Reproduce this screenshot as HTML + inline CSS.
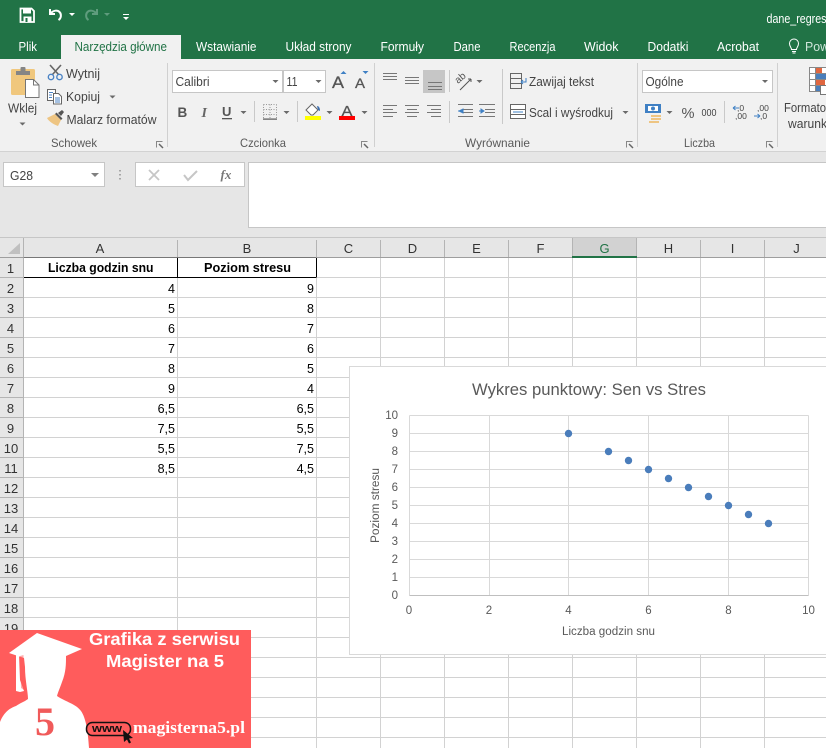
<!DOCTYPE html>
<html><head><meta charset="utf-8"><style>
html,body{margin:0;padding:0;background:#fff;width:826px;height:748px;overflow:hidden}
svg{display:block}
text{font-family:"Liberation Sans",sans-serif;font-size:12.5px;fill:#444}
.t{fill:#fff}
.g{fill:#595959;font-size:12px}
.h{fill:#333;font-size:13px;text-anchor:middle}
.b{fill:#000;font-size:13px;font-weight:bold}
.v{fill:#000;font-size:12.5px;text-anchor:end}
.ct{fill:#595959;font-size:11.5px}
.l{stroke:#777;stroke-width:1;fill:none}
.car{fill:#6a6a6a}
</style></head><body>
<svg width="826" height="748" viewBox="0 0 826 748" xmlns="http://www.w3.org/2000/svg">
<rect width="826" height="748" fill="#fff"/>
<!-- title bar -->
<rect width="826" height="60" fill="#217346"/>
<path d="M20.500 8.500h11l2.500 2.500v11h-13.500z" fill="none" stroke="#fff" stroke-width="1.800"/>
<rect x="23" y="9" width="8" height="4.500" fill="#fff"/><rect x="23.500" y="16.500" width="8" height="5.500" fill="#fff"/><rect x="25.500" y="18" width="2" height="4" fill="#217346"/>
<path d="M50 9v5h5M50.500 13.500c3-3.500 7-3.500 9-1.500s2 6-1 8" fill="none" stroke="#fff" stroke-width="2"/>
<path d="M69 13h6l-3 3z" fill="#fff"/>
<path d="M97 9v5h-5M96.500 13.500c-3-3.500-7-3.500-9-1.500s-2 6 1 8" fill="none" stroke="#5f9c7d" stroke-width="2"/>
<path d="M104 13h6l-3 3z" fill="#5f9c7d"/>
<rect x="123" y="14" width="6" height="1" fill="#fff"/><path d="M123 17h6l-3 3z" fill="#fff"/>
<text class="t" x="766.500" y="23" textLength="60" lengthAdjust="spacingAndGlyphs">dane_regres</text>
<!-- tabs -->
<rect x="61" y="35" width="120" height="25" fill="#f1f1f1"/>
<text class="t" x="18.500" y="51" textLength="18.500" lengthAdjust="spacingAndGlyphs">Plik</text>
<text x="74.500" y="51" textLength="92.500" lengthAdjust="spacingAndGlyphs" style="fill:#217346">Narzędzia główne</text>
<text class="t" x="196" y="51" textLength="60.500" lengthAdjust="spacingAndGlyphs">Wstawianie</text>
<text class="t" x="285.500" y="51" textLength="66" lengthAdjust="spacingAndGlyphs">Układ strony</text>
<text class="t" x="380.500" y="51" textLength="43.500" lengthAdjust="spacingAndGlyphs">Formuły</text>
<text class="t" x="453.500" y="51" textLength="27" lengthAdjust="spacingAndGlyphs">Dane</text>
<text class="t" x="509.500" y="51" textLength="46" lengthAdjust="spacingAndGlyphs">Recenzja</text>
<text class="t" x="584" y="51" textLength="34.500" lengthAdjust="spacingAndGlyphs">Widok</text>
<text class="t" x="647.500" y="51" textLength="41" lengthAdjust="spacingAndGlyphs">Dodatki</text>
<text class="t" x="717" y="51" textLength="42" lengthAdjust="spacingAndGlyphs">Acrobat</text>
<path d="M791.500 49.500c0-2-2-3-2-6a4.500 4.500 0 0 1 9 0c0 3-2 4-2 6zM792 51.500h4M792.500 53h3" fill="none" stroke="#fff" stroke-width="1"/>
<text x="805" y="51" textLength="24" lengthAdjust="spacingAndGlyphs" style="fill:#cfe5da">Pow</text>
<!-- ribbon -->
<rect y="59" width="826" height="92" fill="#f1f1f1"/>
<rect y="151" width="826" height="87" fill="#e6e6e6"/>
<rect y="151" width="826" height="1" fill="#d2d2d2"/>
<path d="M167.500 63v84M374.500 63v84M637.500 63v84M777.500 63v84" stroke="#d0d0d0" fill="none"/>
<!-- clipboard -->
<rect x="11" y="69" width="24" height="26" rx="1.500" fill="#f0c77d"/>
<path d="M16 71h14v4H16z" fill="#858585"/><rect x="20.500" y="67" width="5" height="5" rx="1" fill="#858585"/>
<path d="M25.500 79.500h8l5.500 5.500v12.500h-13.500z" fill="#fff" stroke="#767676"/>
<path d="M33.500 79.500v5.500h5.500" fill="none" stroke="#767676"/>
<text x="8" y="112.500" textLength="29" lengthAdjust="spacingAndGlyphs">Wklej</text>
<path d="M19.500 122.500h6l-3 3z" class="car"/>
<!-- scissors -->
<path d="M50 65l8.500 9.500M61 65l-8.500 9.500" stroke="#666" stroke-width="1.600" fill="none"/>
<circle cx="51" cy="77" r="2.700" fill="none" stroke="#4b83c4" stroke-width="1.400"/><circle cx="59.500" cy="77" r="2.700" fill="none" stroke="#4b83c4" stroke-width="1.400"/>
<text x="66" y="78" textLength="34" lengthAdjust="spacingAndGlyphs">Wytnij</text>
<!-- copy -->
<path d="M47.500 89.500h8v11h-8z" fill="#fff" stroke="#666"/><path d="M53.500 93.500h5l3 3v7.500h-8z" fill="#fff" stroke="#666"/>
<path d="M49 92.500h4M49 95h3M49 97.500h3M55 98h5M55 100h5M55 102h5" stroke="#4b83c4"/>
<text x="66" y="101" textLength="34" lengthAdjust="spacingAndGlyphs">Kopiuj</text>
<path d="M109.500 95.500h6l-3 3z" class="car"/>
<!-- painter -->
<path d="M47 118l8-4 6 6-3 6c-3-1-9-4-11-8z" fill="#eec583"/>
<path d="M55 114l6 6 1.500-1.500-6-6zM58 113l4-3 2 2-3 4z" fill="#555"/>
<text x="66.500" y="124" textLength="90" lengthAdjust="spacingAndGlyphs">Malarz formatów</text>
<text class="g" x="51" y="147" textLength="46" lengthAdjust="spacingAndGlyphs">Schowek</text>
<g fill="none" stroke="#888"><path d="M156.500 147.500v-6h6M361.500 147.500v-6h6M626.500 147.500v-6h6M766.500 147.500v-6h6"/></g>
<path d="M159 144l4 4M364 144l4 4M629 144l4 4M769 144l4 4" stroke="#666" stroke-width="1.500"/>
<!-- font -->
<rect x="172.500" y="70.500" width="110" height="22" fill="#fff" stroke="#c6c6c6"/>
<rect x="283.500" y="70.500" width="42" height="22" fill="#fff" stroke="#c6c6c6"/>
<text x="175.500" y="86" textLength="34" lengthAdjust="spacingAndGlyphs" style="font-size:13px">Calibri</text>
<text x="286.500" y="86" textLength="11" lengthAdjust="spacingAndGlyphs" style="font-size:13px">11</text>
<path d="M272.500 80h6l-3 3zM315.500 80h6l-3 3z" class="car"/>
<text x="332" y="88" textLength="12" lengthAdjust="spacingAndGlyphs" style="font-size:17px;fill:#555;stroke:#555;stroke-width:.3">A</text>
<text x="355" y="88" textLength="10" lengthAdjust="spacingAndGlyphs" style="font-size:14px;fill:#555;stroke:#555;stroke-width:.3">A</text>
<path d="M340.500 74l3-3 3 3z" fill="#3f80c4"/><path d="M362.500 71h6l-3 3z" fill="#3f80c4"/>
<text x="177.500" y="117" style="font-size:13.500px;font-weight:bold;fill:#555">B</text>
<text x="201.500" y="117" style="font-family:'Liberation Serif',serif;font-size:14px;font-style:italic;font-weight:bold;fill:#666">I</text>
<text x="222" y="116" style="font-size:13px;font-weight:bold;fill:#555">U</text>
<rect x="222" y="118" width="10" height="1.300" fill="#555"/>
<path d="M240.500 111h6l-3 3zM283.500 111h6l-3 3zM326.500 111h6l-3 3zM361.500 111h6l-3 3z" class="car"/>
<path d="M254.500 101v21M297.500 101v21" stroke="#c9c9c9"/>
<path d="M263.500 104.500h13M263.500 109.500h13M263.500 114.500h13M263.500 104.500v14M270 104.500v14M276.500 104.500v14" stroke="#999" stroke-dasharray="1 1.500" fill="none"/>
<rect x="263" y="118.500" width="14" height="1.200" fill="#555"/>
<path d="M306 110l6-6 6 6-5 5h-2z" fill="#fff" stroke="#666"/><path d="M317 106c2 0 3 2 3 5l-2-1z" fill="#3f70b0"/>
<rect x="305" y="116" width="16" height="4" fill="#ffff00"/>
<text x="341.500" y="116" textLength="11" lengthAdjust="spacingAndGlyphs" style="font-size:15px;fill:#555;stroke:#555;stroke-width:.3">A</text>
<rect x="339" y="116" width="16" height="4" fill="#ff0000"/>
<text class="g" x="240" y="147" textLength="46" lengthAdjust="spacingAndGlyphs">Czcionka</text>
<!-- alignment -->
<rect x="423" y="70" width="22" height="23" fill="#c6c6c6"/>
<g class="l">
<path d="M383 73.500h14M383 76.500h14M383 79.500h14M405 77.500h14M405 80.500h14M405 83.500h14M428 82.500h14M428 86.500h14M428 89.500h14"/>
<path d="M383 105.500h14M383 109.500h10M383 112.500h14M383 116.500h10M405 105.500h14M407 109.500h10M405 112.500h14M407 116.500h10M427 105.500h14M431 109.500h10M427 112.500h14M431 116.500h10"/>
<path d="M463 109.500h10M463 112.500h10M458 116.500h15M485 109.500h10M485 112.500h10M479 116.500h16M479 104.500h16"/>
<path d="M458 104.500h15"/>
</g>
<path d="M449.500 70v22M449.500 101v22M502.500 69v55M724.500 101v22" stroke="#c9c9c9"/>
<path d="M458 111h5v-2l-4 2 4 2v-2" fill="#3f80c4" stroke="#3f80c4"/><path d="M484 111h-5m5 0l-3-2v4z" fill="#3f80c4" stroke="#3f80c4"/>
<text x="0" y="0" transform="translate(458 84) rotate(-40)" style="font-size:10px;fill:#555">ab</text>
<path d="M460 90l11-11m0 0h-3m3 0v3" stroke="#555" fill="none"/>
<path d="M476.500 80h6l-3 3z" class="car"/>
<path d="M510.500 73.500h11v5h-11zM510.500 78.500h11v5h-11zM510.500 83.500h11v5h-11z" fill="none" stroke="#666"/>
<path d="M526 78v4h-5m0 0l2-2m-2 2l2 2" stroke="#3f80c4" fill="none"/>
<text x="529" y="86" textLength="65" lengthAdjust="spacingAndGlyphs">Zawijaj tekst</text>
<rect x="510.500" y="104.500" width="15" height="14" fill="#fff" stroke="#666"/>
<path d="M510.500 109.500h15M510.500 114.500h15" stroke="#666"/><path d="M513 112h10" stroke="#3f80c4"/>
<text x="529" y="117" textLength="84" lengthAdjust="spacingAndGlyphs">Scal i wyśrodkuj</text>
<path d="M622.500 111h6l-3 3z" class="car"/>
<text class="g" x="465" y="147" textLength="65" lengthAdjust="spacingAndGlyphs">Wyrównanie</text>
<!-- number -->
<rect x="642.500" y="70.500" width="130" height="22" fill="#fff" stroke="#c6c6c6"/>
<text x="645.500" y="86" textLength="38" lengthAdjust="spacingAndGlyphs" style="font-size:13px">Ogólne</text>
<path d="M762 80h6l-3 3z" class="car"/>
<rect x="645" y="104" width="16" height="9" fill="#3f80c4"/><rect x="648" y="106" width="10" height="5" fill="#fff"/><circle cx="653" cy="108.500" r="2" fill="#3f80c4"/>
<path d="M651 115h10v2h-10zM651 118h10v2h-10zM649 121h10v2h-10z" fill="#eec583"/>
<path d="M666.500 111h6l-3 3z" class="car"/>
<text x="681.500" y="118" textLength="13" lengthAdjust="spacingAndGlyphs" style="font-size:15px;fill:#555">%</text>
<text x="701.500" y="116" textLength="15" lengthAdjust="spacingAndGlyphs" style="font-size:10.500px">000</text>
<text x="737" y="111" style="font-size:8.500px">,0</text><text x="735" y="119" style="font-size:8.500px">,00</text>
<path d="M733 108h6m-6 0l2.500-2m-2.500 2l2.500 2" stroke="#3f80c4" fill="none"/>
<text x="757" y="111" style="font-size:8.500px">,00</text><text x="760" y="119" style="font-size:8.500px">,0</text>
<path d="M754 116h6m0 0l-2.500-2m2.500 2l-2.500 2" stroke="#3f80c4" fill="none"/>
<text class="g" x="684" y="147" textLength="31" lengthAdjust="spacingAndGlyphs">Liczba</text>
<!-- conditional -->
<rect x="809.500" y="67.500" width="18" height="24" fill="#fff" stroke="#888"/>
<path d="M809.500 73.500h18M809.500 79.500h18M809.500 85.500h18M815.500 67.500v24" stroke="#888" fill="none"/>
<rect x="816" y="68" width="6" height="5" fill="#e0663f"/><rect x="816" y="74" width="11" height="5" fill="#4a7ebb"/><rect x="816" y="80" width="9" height="5" fill="#e0663f"/><rect x="816" y="86" width="4" height="5" fill="#4a7ebb"/>
<rect x="820.500" y="85.500" width="8" height="9" fill="#fff" stroke="#777"/>
<text x="784" y="112" textLength="42" lengthAdjust="spacingAndGlyphs">Formato</text>
<text x="788" y="128" textLength="39" lengthAdjust="spacingAndGlyphs">warunk</text>
<!-- formula bar -->
<rect x="3.500" y="162.500" width="101" height="24" fill="#fff" stroke="#c6c6c6"/>
<text x="10" y="180" textLength="23" lengthAdjust="spacingAndGlyphs" style="font-size:13px">G28</text>
<path d="M91 173h8l-4 4z" fill="#808080"/>
<path d="M120 170v1.500M120 174v1.500M120 178v1.500" stroke="#a6a6a6" stroke-width="2"/>
<rect x="135.500" y="162.500" width="109" height="24" fill="#fff" stroke="#c6c6c6"/>
<path d="M149 170l10 10M159 170l-10 10" stroke="#c6c6c6" stroke-width="1.800"/>
<path d="M184 175l4 5 9-9" stroke="#c6c6c6" stroke-width="2" fill="none"/>
<text x="220.500" y="179" style="font-family:'Liberation Serif',serif;font-style:italic;font-weight:bold;font-size:13px;fill:#777">fx</text>
<rect x="248.500" y="162.500" width="578" height="65" fill="#fff" stroke="#c6c6c6"/>
<!-- grid -->
<g stroke="#d2d2d2" fill="none">
<path d="M177.500 258V748M316.500 258V748M380.500 258V748M444.500 258V748M508.500 258V748M572.500 258V748M636.500 258V748M700.500 258V748M764.500 258V748"/>
<path d="M24 277.500H826M24 297.500H826M24 317.500H826M24 337.500H826M24 357.500H826M24 377.500H826M24 397.500H826M24 417.500H826M24 437.500H826M24 457.500H826M24 477.500H826M24 497.500H826M24 517.500H826M24 537.500H826M24 557.500H826M24 577.500H826M24 597.500H826M24 617.500H826M24 637.500H826M24 657.500H826M24 677.500H826M24 697.500H826M24 717.500H826M24 737.500H826"/>
</g>
<!-- headers -->
<rect x="0" y="238" width="826" height="19" fill="#e6e6e6"/>
<rect x="0" y="238" width="23" height="510" fill="#e6e6e6"/>
<rect x="572.500" y="238" width="64" height="19" fill="#d2d2d2"/>
<path d="M0 237.500H826" stroke="#c6c6c6"/>
<path d="M20 243v11H8z" fill="#c0c0c0"/>
<path d="M23.500 238V748M177.500 240V257M316.500 240V257M380.500 240V257M444.500 240V257M508.500 240V257M572.500 238V257M636.500 238V257M700.500 240V257M764.500 240V257" stroke="#b4b4b4" fill="none"/>
<path d="M0 257.500H572M637 257.500H826" stroke="#9e9e9e"/>
<rect x="572" y="256" width="65" height="2" fill="#217346"/>
<path d="M0 277.500H23M0 297.500H23M0 317.500H23M0 337.500H23M0 357.500H23M0 377.500H23M0 397.500H23M0 417.500H23M0 437.500H23M0 457.500H23M0 477.500H23M0 497.500H23M0 517.500H23M0 537.500H23M0 557.500H23M0 577.500H23M0 597.500H23M0 617.500H23M0 637.500H23" stroke="#b4b4b4"/>
<text class="h" x="100" y="253">A</text><text class="h" x="247" y="253">B</text><text class="h" x="348.500" y="253">C</text><text class="h" x="412.500" y="253">D</text><text class="h" x="476.500" y="253">E</text><text class="h" x="540.500" y="253">F</text><text class="h" x="604.500" y="253" style="fill:#217346">G</text><text class="h" x="668.500" y="253">H</text><text class="h" x="732.500" y="253">I</text><text class="h" x="796.500" y="253">J</text>
<g>
<text class="h" x="10.500" y="273">1</text><text class="h" x="10.500" y="293">2</text><text class="h" x="10.500" y="313">3</text><text class="h" x="10.500" y="333">4</text><text class="h" x="10.500" y="353">5</text><text class="h" x="10.500" y="373">6</text><text class="h" x="10.500" y="393">7</text><text class="h" x="10.500" y="413">8</text><text class="h" x="10.500" y="433">9</text><text class="h" x="11" y="453">10</text><text class="h" x="11" y="473">11</text><text class="h" x="11" y="493">12</text><text class="h" x="11" y="513">13</text><text class="h" x="11" y="533">14</text><text class="h" x="11" y="553">15</text><text class="h" x="11" y="573">16</text><text class="h" x="11" y="593">17</text><text class="h" x="11" y="613">18</text><text class="h" x="11" y="633">19</text>
</g>
<!-- table -->
<path d="M24 277.500H316.500M177.500 258V277M316.500 258V277" stroke="#000" fill="none"/>
<path d="M24 257.500H316" stroke="#777"/>
<text class="b" x="48" y="272" textLength="105.500" lengthAdjust="spacingAndGlyphs">Liczba godzin snu</text>
<text class="b" x="204" y="272" textLength="87" lengthAdjust="spacingAndGlyphs">Poziom stresu</text>
<text class="v" x="175" y="293">4</text><text class="v" x="314" y="293">9</text>
<text class="v" x="175" y="313">5</text><text class="v" x="314" y="313">8</text>
<text class="v" x="175" y="333">6</text><text class="v" x="314" y="333">7</text>
<text class="v" x="175" y="353">7</text><text class="v" x="314" y="353">6</text>
<text class="v" x="175" y="373">8</text><text class="v" x="314" y="373">5</text>
<text class="v" x="175" y="393">9</text><text class="v" x="314" y="393">4</text>
<text class="v" x="175" y="413">6,5</text><text class="v" x="314" y="413">6,5</text>
<text class="v" x="175" y="433">7,5</text><text class="v" x="314" y="433">5,5</text>
<text class="v" x="175" y="453">5,5</text><text class="v" x="314" y="453">7,5</text>
<text class="v" x="175" y="473">8,5</text><text class="v" x="314" y="473">4,5</text>
<!-- chart -->
<rect x="349.500" y="366.500" width="480" height="288" fill="#fff" stroke="#d9d9d9"/>
<text x="472" y="395" textLength="234" lengthAdjust="spacingAndGlyphs" style="font-size:17px;fill:#595959">Wykres punktowy: Sen vs Stres</text>
<g stroke="#d9d9d9" fill="none">
<path d="M409.500 415.500H808.500M409.500 433.500H808.500M409.500 451.500H808.500M409.500 469.500H808.500M409.500 487.500H808.500M409.500 505.500H808.500M409.500 523.500H808.500M409.500 541.500H808.500M409.500 559.500H808.500M409.500 577.500H808.500"/>
<path d="M409.500 415.500V595.500M489.500 415.500V595.500M568.500 415.500V595.500M648.500 415.500V595.500M728.500 415.500V595.500M808.500 415.500V595.500"/>
</g>
<path d="M409.500 595.500H808.500" stroke="#bfbfbf"/>
<g text-anchor="end">
<text class="ct" x="398" y="419">10</text><text class="ct" x="398" y="437">9</text><text class="ct" x="398" y="455">8</text><text class="ct" x="398" y="473">7</text><text class="ct" x="398" y="491">6</text><text class="ct" x="398" y="509">5</text><text class="ct" x="398" y="527">4</text><text class="ct" x="398" y="545">3</text><text class="ct" x="398" y="563">2</text><text class="ct" x="398" y="581">1</text><text class="ct" x="398" y="599">0</text>
</g>
<g text-anchor="middle">
<text class="ct" x="409" y="614">0</text><text class="ct" x="489" y="614">2</text><text class="ct" x="568.500" y="614">4</text><text class="ct" x="648.500" y="614">6</text><text class="ct" x="728.500" y="614">8</text><text class="ct" x="808.500" y="614">10</text>
</g>
<text class="ct" x="562" y="635" textLength="93" lengthAdjust="spacingAndGlyphs">Liczba godzin snu</text>
<text class="ct" transform="translate(379 543) rotate(-90)" textLength="75" lengthAdjust="spacingAndGlyphs">Poziom stresu</text>
<g fill="#4a7dbb">
<circle cx="568.500" cy="433.500" r="3.700"/><circle cx="608.500" cy="451.500" r="3.700"/><circle cx="628.500" cy="460.500" r="3.700"/><circle cx="648.500" cy="469.500" r="3.700"/><circle cx="668.500" cy="478.500" r="3.700"/><circle cx="688.500" cy="487.500" r="3.700"/><circle cx="708.500" cy="496.500" r="3.700"/><circle cx="728.500" cy="505.500" r="3.700"/><circle cx="748.500" cy="514.500" r="3.700"/><circle cx="768.500" cy="523.500" r="3.700"/>
</g>
<!-- logo -->
<rect x="0" y="630" width="251" height="118" fill="#ff5c5c"/>
<path d="M37 633L82 649L66 656C66 664 66 672 62 682C60 688 58 692 57 696C66 702 76 704 81 711C86 718 88 732 89 748H0V722C4 712 10 708 16 706C20 703 24 702 28 699C28 692 25 680 25 667L24 658L9 653Z" fill="#fff"/>
<path d="M16 655h3l1 25 4 11-4 1-4-1z" fill="#fff"/>
<path d="M20 656L23.500 655L24 690L21 688Z" fill="#ff5c5c" opacity=".5"/>
<text x="45" y="735" text-anchor="middle" style="font-family:'Liberation Serif',serif;font-weight:bold;font-size:40px;fill:#f05a5a">5</text>
<text x="89" y="645" textLength="151" lengthAdjust="spacingAndGlyphs" style="font-size:17.500px;font-weight:bold;fill:#fff">Grafika z serwisu</text>
<text x="106" y="667" textLength="118" lengthAdjust="spacingAndGlyphs" style="font-size:17.500px;font-weight:bold;fill:#fff">Magister na 5</text>
<rect x="86.500" y="722.500" width="44" height="13" rx="6" fill="none" stroke="#111" stroke-width="1.500"/>
<text x="92" y="732" textLength="30" lengthAdjust="spacingAndGlyphs" style="font-size:11px;font-weight:bold;fill:#111">www</text>
<path d="M123 730l10 8-4 .5 2 4-2 1-2-4-3 2.500z" fill="#111"/>
<text x="133" y="733" textLength="112" lengthAdjust="spacingAndGlyphs" style="font-family:'Liberation Serif',serif;font-size:17px;font-weight:bold;fill:#fff">magisterna5.pl</text>
</svg>
</body></html>
